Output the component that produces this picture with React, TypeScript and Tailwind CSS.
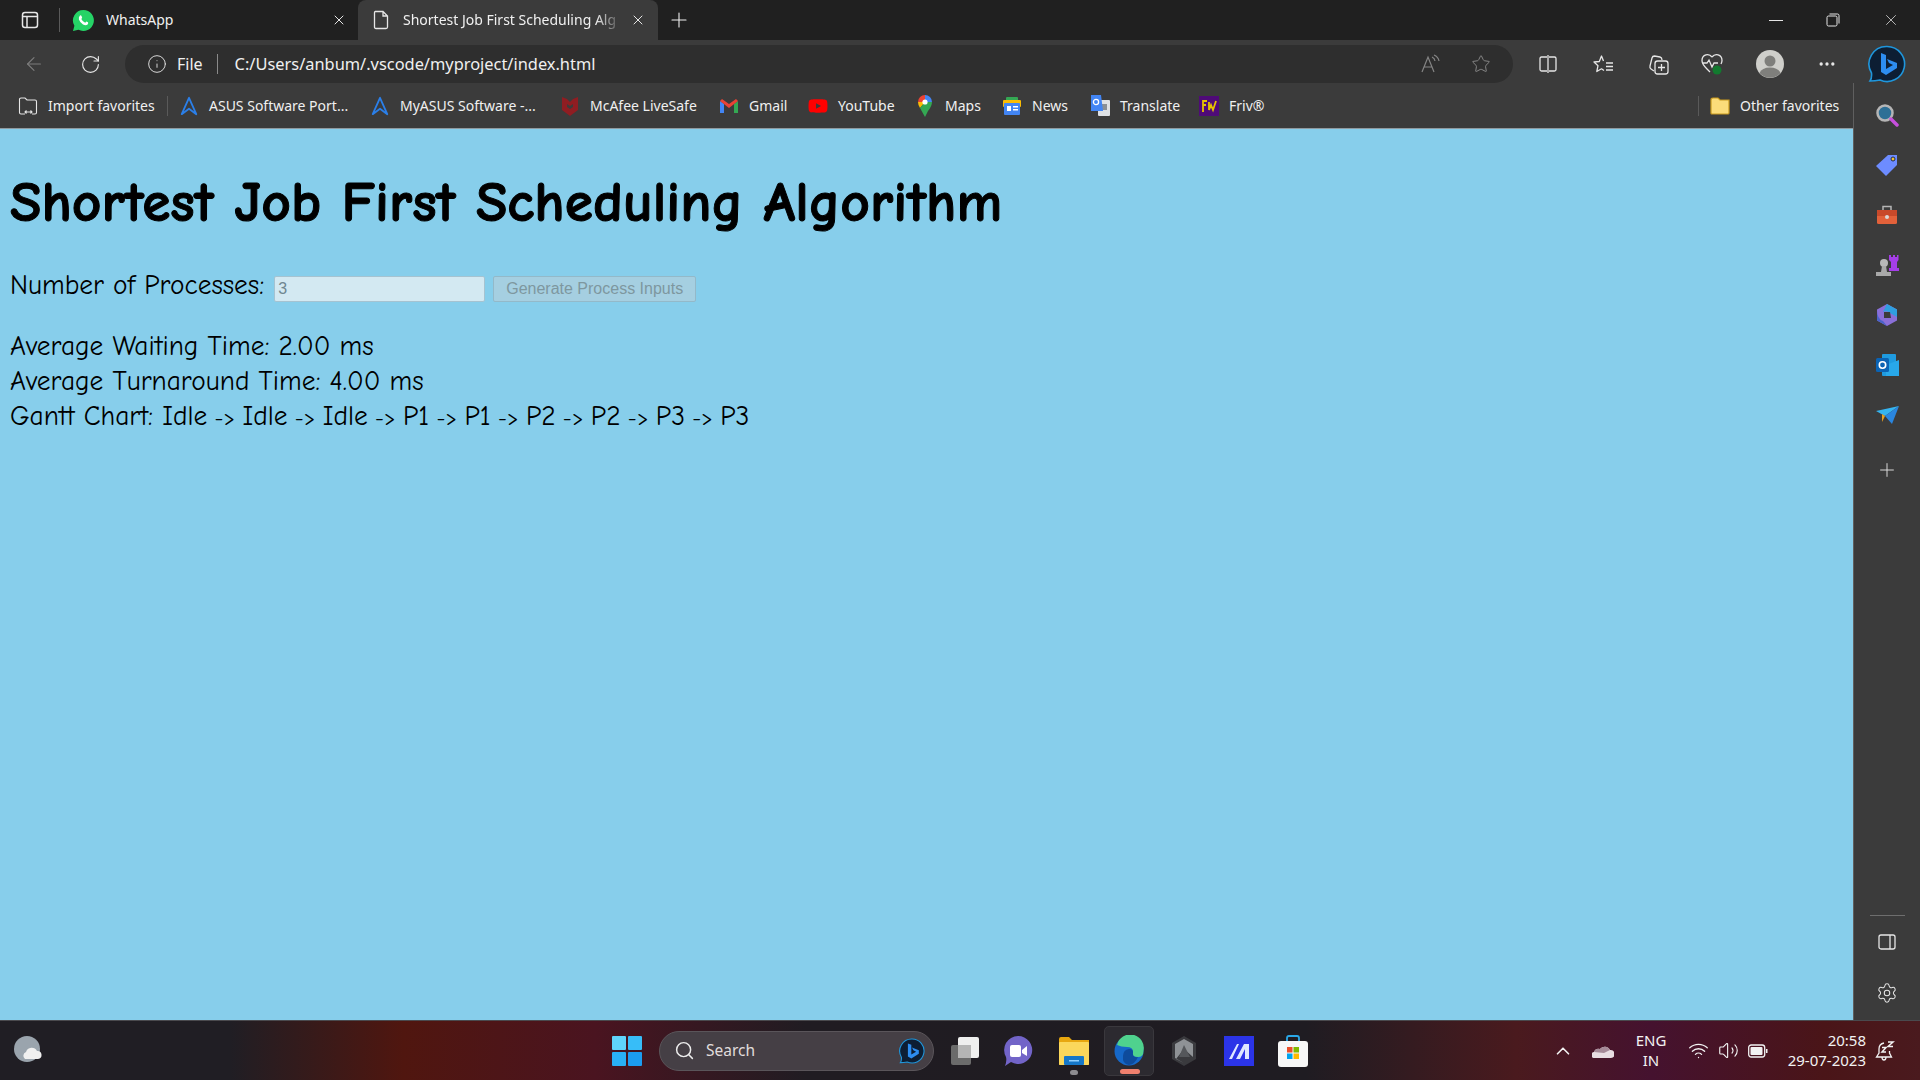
import React from "react";
import {
  ArrowLeft,
  ChevronUp,
  Info,
  MoreHorizontal,
  Plus,
  RotateCw,
  Search,
  Settings,
  Star,
  Volume2,
  Wifi,
  X,
} from "lucide-react";
import { FaYoutube } from "react-icons/fa";

const ui = "font-['Noto_Sans','Open_Sans',sans-serif]";

const Slot: React.FC<{ w: string; children?: React.ReactNode }> = ({ w, children }) => (
  <div className={`${w} h-full flex items-center justify-center shrink-0`}>{children}</div>
);

const WhatsAppIcon = () => (
  <svg width="23" height="23" viewBox="0 0 23 23" className="shrink-0">
    <path d="M11.500 1 A10.500 10.500 0 1 1 6.500 20.800 L1 22 L2.400 16.800 A10.500 10.500 0 0 1 11.500 1 Z" fill="#25d366" />
    <path d="M8 6.500 Q9 6 9.500 7 L10.200 8.700 L9.300 10 Q10.500 12.500 13.200 13.700 L14.400 12.500 L16 13.300 Q16.600 14.300 15.600 15.500 Q13.800 16.800 11 15.400 Q8 13.700 6.900 10.500 Q6.400 8 8 6.500 Z" fill="#fff" />
  </svg>
);

const AsusIcon = () => (
  <svg width="22" height="22" viewBox="0 0 22 22" fill="none" stroke="#2b7fe8" strokeWidth="2" strokeLinejoin="round">
    <path d="M11 2 L3 20 L11 14 L19 20 Z" />
  </svg>
);

const McAfeeIcon = () => (
  <svg width="18" height="22" viewBox="0 0 18 22">
    <path d="M1 2 L6 4 V12 L9 14 L12 12 V4 L17 2 V15 L9 21 L1 15 Z" fill="#8f1d22" />
    <path d="M6 4 L9 7 L12 4 V9 L9 11 L6 9 Z" fill="#8f1d22" />
  </svg>
);

const GmailIcon = () => (
  <svg width="20" height="16" viewBox="0 0 20 16">
    <path d="M1 3 V15 H5 V6 Z" fill="#4285f4" />
    <path d="M15 6 V15 H19 V3 Z" fill="#34a853" />
    <path d="M1 3 L10 10 L19 3 L17 1 L10 6 L3 1 Z" fill="#ea4335" />
  </svg>
);

const MapsIcon = () => (
  <svg width="16" height="24" viewBox="0 0 16 24">
    <path d="M8 1 A7 7 0 0 1 15 8 L8 8 Z" fill="#4285f4" />
    <path d="M1 8 A7 7 0 0 1 8 1 L8 8 Z" fill="#ea4335" />
    <path d="M1 8 H8 L3 14 Q1 11 1 8 Z" fill="#fbbc04" />
    <path d="M15 8 Q15 12 11 17 L8 23 L3 14 L8 8 Z" fill="#34a853" />
    <circle cx="8" cy="8" r="2.600" fill="#fff" />
  </svg>
);

const NewsIcon = () => (
  <svg width="20" height="20" viewBox="0 0 20 20">
    <rect x="4" y="1" width="12" height="8" rx="1" fill="#34a853" />
    <rect x="1" y="4" width="18" height="7" rx="1" fill="#fbbc04" />
    <rect x="2" y="7" width="16" height="12" rx="1" fill="#4285f4" />
    <rect x="5" y="10" width="4" height="5" fill="#fff" />
    <rect x="11" y="10" width="5" height="1.500" fill="#fff" />
    <rect x="11" y="13" width="5" height="1.500" fill="#fff" />
  </svg>
);

const TranslateIcon = () => (
  <svg width="20" height="22" viewBox="0 0 20 22">
    <rect x="8" y="5" width="12" height="16" rx="1" fill="#dfe1e5" />
    <rect x="11" y="9" width="6" height="6" fill="#8a8f96" />
    <path d="M1 0 H11 L13 16 H1 Z" fill="#4285f4" />
    <circle cx="6" cy="7" r="2.600" fill="none" stroke="#fff" strokeWidth="1.300" />
  </svg>
);

const FrivIcon = () => (
  <svg width="20" height="20" viewBox="0 0 20 20">
    <rect width="20" height="20" fill="#4f0a78" />
    <path d="M4 16 V5 H8 M4 9 H7 M10 6 V14 L12 9 L14 14 L17 5" fill="none" stroke="#e6c200" strokeWidth="1.800" />
  </svg>
);

const FolderIcon = () => (
  <svg width="20" height="18" viewBox="0 0 20 18">
    <path d="M1 3 Q1 1 3 1 H8 L10 3 H19 V16 Q19 17 18 17 H2 Q1 17 1 16 Z" fill="#fbdc7a" stroke="#c99a1f" strokeWidth="1.200" />
  </svg>
);

const ImportIcon = () => (
  <svg width="20" height="20" viewBox="0 0 20 20" fill="none" stroke="#e6e6e6" strokeWidth="1.100">
    <path d="M7 18 H3 Q1.500 18 1.500 16.500 V3 Q1.500 2 3 2 H7 L9 4 H17 Q18.500 4 18.500 5.500 V16.500 Q18.500 18 17 18 H14" />
    <path d="M7 16 H14 M8.500 14.500 L7 16 L8.500 17.500 M12.500 14.500 L14 16 L12.500 17.500" />
  </svg>
);

const Bookmark: React.FC<{ w: string; icon: React.ReactNode; label: string }> = ({ w, icon, label }) => (
  <div className={`${w} h-full flex items-center shrink-0`}>
    <div className="w-[20px] flex items-center justify-center shrink-0">{icon}</div>
    <span className="ml-[10px] text-[14px] text-[#f0f0f0] whitespace-nowrap">{label}</span>
  </div>
);

const TabBar = () => (
  <div className="h-10 bg-[#202020] flex items-stretch shrink-0">
    <Slot w="w-[59px]">
      <svg width="20" height="20" viewBox="0 0 20 20" fill="none" stroke="#e6e6e6" strokeWidth="1.500">
        <rect x="2.500" y="2.500" width="15" height="15" rx="2.500" />
        <path d="M2.500 6.500 H17.500 M7 6.500 V17.500" />
      </svg>
    </Slot>
    <div className="w-px h-6 self-center bg-[#5a5a5a]" />
    <div className="w-[298px] flex items-center pl-[12px] pr-[11px] shrink-0">
      <WhatsAppIcon />
      <span className="ml-[11px] mb-[2px] text-[14px] text-[#f0f0f0]">WhatsApp</span>
      <X className="ml-auto text-[#e6e6e6] w-4 h-4" strokeWidth={1.5} />
    </div>
    <div className="w-[300px] bg-[#3b3b3b] rounded-t-lg flex items-center pl-[14px] pr-[12px] shrink-0">
      <svg width="18" height="20" viewBox="0 0 18 20" fill="none" stroke="#e6e6e6" strokeWidth="1.300" className="shrink-0">
        <path d="M3 1.500 H11 L15.500 6 V17 Q15.500 18.500 14 18.500 H4 Q2.500 18.500 2.500 17 V2.500 Q2.500 1.500 3.500 1.500 M11 1.500 V6 H15.500" />
      </svg>
      <span className="ml-[13px] mb-[2px] w-[219px] overflow-hidden whitespace-nowrap text-[14px] text-[#f0f0f0] [mask-image:linear-gradient(90deg,#000_88%,transparent)]">
        Shortest Job First Scheduling Alg
      </span>
      <X className="ml-auto text-[#e6e6e6] w-4 h-4" strokeWidth={1.5} />
    </div>
    <Slot w="w-[42px]">
      <Plus className="text-[#f0f0f0] w-6 h-6" strokeWidth={1.1} />
    </Slot>
    <div className="flex-1" />
    <Slot w="w-[57px]">
      <div className="w-[14px] h-px bg-[#e6e6e6]" />
    </Slot>
    <Slot w="w-[58px]">
      <svg width="14" height="14" viewBox="0 0 14 14" fill="none" stroke="#e6e6e6" strokeWidth="1">
        <rect x="1" y="3" width="10" height="10" rx="1.500" />
        <path d="M3.500 1 H11.500 Q13 1 13 2.500 V10.500" />
      </svg>
    </Slot>
    <Slot w="w-[58px]">
      <X className="text-[#e6e6e6] w-[18px] h-[18px]" strokeWidth={1} />
    </Slot>
  </div>
);

const BingIcon: React.FC<{ size: number }> = ({ size }) => (
  <svg width={size} height={size} viewBox="0 0 38 38">
    <path d="M19 1.500 A17.500 17.500 0 1 1 12 35 Q7 36 2 36 Q4 33 3.500 28 A17.500 17.500 0 0 1 19 1.500 Z" fill="#0d1e33" stroke="#1f96dc" strokeWidth="1.600" />
    <path d="M13 8 L18 10 V24 L25 20 L21 18 L19 14 L29 18 V23 L18 30 L13 27 Z" fill="#2d8df0" />
  </svg>
);

const Toolbar = () => (
  <div className="h-[43px] bg-[#3b3b3b] pt-[5px] flex items-stretch shrink-0">
    <Slot w="w-[62px] pl-[6px]">
      <ArrowLeft className="text-[#7d7d7d] w-[22px] h-[22px]" strokeWidth={1.2} />
    </Slot>
    <Slot w="w-[56px]">
      <RotateCw className="text-[#e6e6e6] w-[21px] h-[21px]" strokeWidth={1.3} />
    </Slot>
    <div className="ml-[7px] w-[1388px] bg-[#2e2e2e] rounded-full flex items-center pl-[22px] pr-[22px] text-[#f0f0f0] shrink-0">
      <Info className="w-[20px] h-[20px] text-[#e6e6e6]" strokeWidth={1.1} />
      <span className="ml-[10px] text-[16px]">File</span>
      <div className="ml-[14px] w-px h-[20px] bg-[#8a8a8a]" />
      <span className="ml-[17px] text-[16.400px]">C:/Users/anbum/.vscode/myproject/index.html</span>
      <div className="ml-auto flex items-center gap-[30px] text-[#858585]">
        <svg width="20" height="20" viewBox="0 0 20 20" fill="none" stroke="currentColor" strokeWidth="1.200">
          <path d="M1 18 L7 3 L13 18 M3 13 H11 M11 3 A5 5 0 0 1 14 7 M13 1 A8 8 0 0 1 18 7" />
        </svg>
        <Star className="w-[20px] h-[20px]" strokeWidth={1.2} />
      </div>
    </div>
    <div className="w-[7px] shrink-0" />
    <Slot w="w-[56px]">
      <svg width="20" height="20" viewBox="0 0 20 20" fill="none" stroke="#e6e6e6" strokeWidth="1.300">
        <path d="M9 3 H3.500 Q2 3 2 4.500 V15.500 Q2 17 3.500 17 H9 M11 3 H16.500 Q18 3 18 4.500 V15.500 Q18 17 16.500 17 H11 M10 1 V19" />
      </svg>
    </Slot>
    <Slot w="w-[55px]">
      <svg width="21" height="21" viewBox="0 0 21 21" fill="none" stroke="#e6e6e6" strokeWidth="1.300" strokeLinejoin="round">
        <path d="M10.500 7 L8.500 2 L6.300 7.500 L1 8 L5 11.700 L3.800 17.500 L8.500 14.800 L11 16.500" />
        <path d="M13 9 H20 M13 12.500 H20 M13 16 H20" />
      </svg>
    </Slot>
    <Slot w="w-[54px]">
      <svg width="21" height="21" viewBox="0 0 21 21" fill="none" stroke="#e6e6e6" strokeWidth="1.300">
        <path d="M6 17 L3 15 Q1.500 14 2 12 L4 4 Q4.500 2 6.500 2 L12 3 Q14 3.500 14 6" />
        <rect x="7" y="7" width="13" height="13" rx="2.500" />
        <path d="M13.500 10 V17 M10 13.500 H17" />
      </svg>
    </Slot>
    <Slot w="w-[54px]">
      <svg width="24" height="24" viewBox="0 0 24 24" fill="none" stroke="#e6e6e6" strokeWidth="1.300">
        <path d="M12 5 C9 1 2 2 2 8.500 C2 12 5 15 7 17 M12 5 C15 1 22 2 22 8.500 Q22 10 21 12 M2 11 H7 L9 8 L12 15 L14 11 H18 M7 17 L10 20" />
        <circle cx="17" cy="18" r="4.500" fill="#127a2f" stroke="none" />
      </svg>
    </Slot>
    <Slot w="w-[62px]">
      <svg width="28" height="28" viewBox="0 0 28 28">
        <circle cx="14" cy="14" r="14" fill="#cfcfcb" />
        <circle cx="14" cy="11" r="5.500" fill="#7f7f7c" />
        <path d="M3.500 23 Q6 17.500 14 17.500 Q22 17.500 24.500 23 A14 14 0 0 1 3.500 23 Z" fill="#7f7f7c" />
      </svg>
    </Slot>
    <Slot w="w-[52px]">
      <MoreHorizontal className="text-[#e6e6e6] w-5 h-5" strokeWidth={2} />
    </Slot>
    <Slot w="w-[67px]">
      <BingIcon size={38} />
    </Slot>
  </div>
);

const BookmarksBar = () => (
  <div className="h-[45px] flex items-center pl-[18px] pr-[12px] shrink-0">
    <Bookmark w="w-[149px]" icon={<ImportIcon />} label="Import favorites" />
    <div className="w-px h-5 bg-[#5a5a5a] shrink-0" />
    <div className="w-[11px] shrink-0" />
    <Bookmark w="w-[191px]" icon={<AsusIcon />} label="ASUS Software Port..." />
    <Bookmark w="w-[190px]" icon={<AsusIcon />} label="MyASUS Software -..." />
    <Bookmark w="w-[159px]" icon={<McAfeeIcon />} label="McAfee LiveSafe" />
    <Bookmark w="w-[89px]" icon={<GmailIcon />} label="Gmail" />
    <Bookmark w="w-[107px]" icon={<FaYoutube className="text-[#ff0000] w-[20px] h-[20px]" />} label="YouTube" />
    <Bookmark w="w-[87px]" icon={<MapsIcon />} label="Maps" />
    <Bookmark w="w-[88px]" icon={<NewsIcon />} label="News" />
    <Bookmark w="w-[109px]" icon={<TranslateIcon />} label="Translate" />
    <Bookmark w="w-[60px]" icon={<FrivIcon />} label="Friv®" />
    <div className="flex-1" />
    <div className="w-px h-5 bg-[#5a5a5a] shrink-0" />
    <div className="w-[11px] shrink-0" />
    <Bookmark w="w-[131px]" icon={<FolderIcon />} label="Other favorites" />
  </div>
);

const Arrow = () => <span className="text-[21.900px]"> -&gt; </span>;

const Page = () => (
  <div className="flex-1 bg-[#87ceeb] border-t border-[#8f9aa0] p-[10px] text-black font-['Comic_Sans_MS','Comic_Neue',cursive]">
    <h1 className="mt-[29px] text-[57.500px] leading-[68px] font-bold whitespace-nowrap [-webkit-text-stroke:1px_black]">
      Shortest Job First Scheduling Algorithm
    </h1>
    <div className="mt-[32px] flex items-center text-[27.400px] leading-[35px]">
      <span>Number of Processes:</span>
      <input
        disabled
        value="3"
        readOnly
        className="ml-[10px] mt-[6px] w-[211px] h-[26px] px-[3px] leading-none bg-[#d3e9f2] border border-[#a5c3d1] rounded-[2px] text-[16px] text-[#6f8791] font-['Liberation_Sans',sans-serif]"
      />
      <button
        disabled
        className="ml-[8px] mt-[6px] w-[203px] h-[26px] leading-none bg-[#a5cfe1] border border-[#93b9c9] rounded-[2px] text-[16px] text-[#7e979f] font-['Liberation_Sans',sans-serif]"
      >
        Generate Process Inputs
      </button>
    </div>
    <div className="mt-[26px] text-[27.400px] leading-[35px]">
      <div>Average Waiting Time: 2.00 ms</div>
      <div>Average Turnaround Time: 4.00 ms</div>
      <div className="whitespace-pre">
        Gantt Chart: Idle<Arrow />Idle<Arrow />Idle<Arrow />P1<Arrow />P1<Arrow />P2<Arrow />P2<Arrow />P3<Arrow />P3
      </div>
    </div>
  </div>
);

const Sidebar = () => (
  <div className="w-[67px] border-l border-[#5f5f5f] flex flex-col items-center pt-[20px] pb-[16px] shrink-0">
    <div className="flex flex-col items-center gap-[26px]">
      <svg width="24" height="24" viewBox="0 0 24 24">
        <circle cx="10" cy="10" r="7.500" fill="#2d6f96" stroke="#b5b5b5" strokeWidth="2.500" />
        <path d="M16 16 L22 22" stroke="#c64fdc" strokeWidth="3.500" strokeLinecap="round" />
      </svg>
      <svg width="24" height="24" viewBox="0 0 24 24">
        <path d="M13 2 H22 V12 L11 23 L1 13 Z" fill="#6d8cff" />
        <circle cx="18" cy="6" r="2" fill="#f4c430" stroke="#1c2a55" />
      </svg>
      <svg width="24" height="24" viewBox="0 0 24 24">
        <path d="M8 7 V3.500 H16 V7" fill="none" stroke="#b5b5b5" strokeWidth="1.500" />
        <rect x="2" y="7" width="20" height="14" rx="1.500" fill="#e2613a" />
        <rect x="2" y="7" width="20" height="6" fill="#c8492a" />
        <circle cx="12" cy="14" r="2" fill="#d9d9d9" />
      </svg>
      <svg width="24" height="24" viewBox="0 0 24 24">
        <circle cx="9" cy="10" r="4" fill="#b8b8b8" />
        <path d="M7 13 H11 L12 19 H16 V23 H1 V19 H6 Z" fill="#a9a9a9" />
        <path d="M14 2 H16 V4 H18 V2 H20 V4 H22 V2 H23.500 V7 L22 9 V15 H24 V18 H14 V15 H16 V9 L14 7 Z" fill="#a53ee8" />
      </svg>
      <svg width="24" height="24" viewBox="0 0 24 24">
        <path d="M12 1 L22 6.500 V17.500 L12 23 L2 17.500 V6.500 Z" fill="#8a6fd8" />
        <path d="M12 1 L22 6.500 V14 L15 10 Q12 7 8 9 Z" fill="#2f9fe0" />
        <path d="M2 7 Q2 16 8 18 L12 23 L2 17.500 Z" fill="#4a62c8" />
        <path d="M9 9 H15 L16 15 H9 Z" fill="#3b3b3b" />
      </svg>
      <svg width="24" height="24" viewBox="0 0 24 24">
        <rect x="7" y="1" width="14" height="22" rx="1" fill="#1f9be0" />
        <path d="M11 12 L24 7 V23 H11 Z" fill="#28a8ea" />
        <rect x="1" y="5" width="13" height="14" rx="1.500" fill="#0a63b4" />
        <circle cx="7.500" cy="12" r="3.200" fill="none" stroke="#fff" strokeWidth="1.600" />
      </svg>
      <svg width="24" height="24" viewBox="0 0 24 22">
        <path d="M1 7 L24 2 L10 12 Z" fill="#35b4f0" />
        <path d="M24 2 L17 20 L10 12 Z" fill="#2a86e0" />
        <path d="M7 10 L10 12 L7 18 Z" fill="#e8a020" />
      </svg>
    </div>
    <Plus className="mt-[32px] text-[#e6e6e6] w-[22px] h-[22px]" strokeWidth={1} />
    <div className="mt-auto w-[35px] h-px bg-[#6e6e6e]" />
    <svg width="20" height="20" viewBox="0 0 20 20" fill="none" stroke="#e6e6e6" strokeWidth="1.300" className="mt-[16px]">
      <rect x="2" y="3" width="16" height="14" rx="2" />
      <path d="M13 3 V17" />
    </svg>
    <Settings className="mt-[30px] text-[#e6e6e6] w-[22px] h-[22px]" strokeWidth={1.1} />
  </div>
);

const Taskbar = () => (
  <div className="h-[60px] border-t border-[#4a4a4e] flex items-center text-white shrink-0 bg-[linear-gradient(90deg,#201e24_0%,#201e24_12%,#50160f_21%,#4a1420_31%,#201c22_42%,#1f1c22_68%,#4a1a1e_79%,#45122f_86%,#4a1518_95%,#4a1a1e_100%)]">
    <svg width="32" height="32" viewBox="0 0 32 32" className="ml-[13px] shrink-0">
      <circle cx="14" cy="14" r="13" fill="#9aa4ad" />
      <path d="M12 24 A4 4 0 0 1 13 17 A6 6 0 0 1 24 16 A4 4 0 0 1 25 24 Z" fill="#f0f0f0" />
    </svg>
    <svg width="30" height="30" viewBox="0 0 30 30" className="ml-[567px] shrink-0">
      <rect x="0" y="0" width="14" height="14" rx="1" fill="#5fd4fb" />
      <rect x="16" y="0" width="14" height="14" rx="1" fill="#37bdf8" />
      <rect x="0" y="16" width="14" height="14" rx="1" fill="#29b0f5" />
      <rect x="16" y="16" width="14" height="14" rx="1" fill="#1b9cf0" />
    </svg>
    <div className="ml-[17px] w-[275px] h-10 rounded-full bg-[#453f45] border border-[#5a555a] flex items-center pl-[14px] pr-[8px] shrink-0">
      <Search className="w-[21px] h-[21px] text-[#ececec]" strokeWidth={1.700} />
      <span className={`ml-[11px] text-[15.500px] text-[#e0dcdc] ${ui}`}>Search</span>
      <div className="ml-auto">
        <BingIcon size={26} />
      </div>
    </div>
    <div className="ml-[15px] w-[32px] flex justify-center shrink-0">
      <svg width="30" height="30" viewBox="0 0 30 30">
        <rect x="1" y="9" width="20" height="20" rx="2" fill="#6b6b6b" />
        <rect x="8" y="1" width="21" height="21" rx="2" fill="#efefef" />
        <rect x="8" y="9" width="13" height="13" fill="#b5b5b5" />
      </svg>
    </div>
    <div className="ml-[21px] w-[32px] flex justify-center shrink-0">
      <svg width="30" height="32" viewBox="0 0 30 32">
        <path d="M15 1 A14 14 0 1 1 8 27 L2 31 Q4 26 3 22 A14 14 0 0 1 15 1 Z" fill="#7264c8" />
        <rect x="7" y="10" width="11" height="12" rx="2" fill="#fff" />
        <path d="M19 15 L24 11 V21 L19 18 Z" fill="#fff" />
      </svg>
    </div>
    <div className="relative ml-[24px] w-[32px] flex justify-center shrink-0">
      <svg width="32" height="30" viewBox="0 0 32 30">
        <path d="M1 3 Q1 1 3 1 H11 L14 4 H31 V28 Q31 29 30 29 H2 Q1 29 1 28 Z" fill="#e8a70f" />
        <rect x="1" y="6" width="30" height="23" rx="1" fill="#fbd75b" />
        <rect x="6" y="20" width="20" height="9" rx="1" fill="#1677c8" />
        <rect x="11" y="24" width="10" height="1.500" fill="#8fd0ff" />
      </svg>
      <div className="absolute -bottom-[9px] left-[12px] w-[8px] h-[5px] rounded-full bg-[#8d8b90]" />
    </div>
    <div className="relative ml-[14px] w-[50px] h-[50px] rounded-[5px] bg-[#2c2a30] border border-[#3a383d] flex items-center justify-center shrink-0">
      <svg width="30" height="32" viewBox="0 0 30 32">
        <circle cx="15" cy="16" r="14.500" fill="#1668c8" />
        <path d="M3 10 A13.500 13.500 0 0 1 29.500 16 Q29.500 22 24 22 Q17 22 19 17 Q19 12 13 12 Q7 12 3 10 Z" fill="#4fd28e" />
        <path d="M19 17 Q18 23 24 22 Q21 29 15 30 Q8 29 9 21 Q9 15 15 14 Q19 14 19 17 Z" fill="#0e4b9c" />
      </svg>
      <div className="absolute bottom-[1px] left-[15px] w-[20px] h-[5px] rounded-full bg-[#f0806e]" />
    </div>
    <div className="ml-[14px] w-[32px] flex justify-center shrink-0">
      <svg width="26" height="32" viewBox="0 0 26 32">
        <path d="M13 1 L25 8 V24 L13 31 L1 24 V8 Z" fill="#3a3a3e" />
        <path d="M13 4 L22 9 V22 L13 14 L5 24 L13 28 L4 23 V9 Z" fill="#8f9296" />
        <path d="M13 10 L19 22 H8 Z" fill="#55575b" />
      </svg>
    </div>
    <div className="ml-[24px] w-[30px] h-[30px] shrink-0">
      <svg width="30" height="30" viewBox="0 0 30 30">
        <rect width="30" height="30" fill="#2b34e8" />
        <path d="M5 23 L13 8 H15 L8 23 Z M12 23 L20 8 H25 V23 H21 V13 L16 23 Z" fill="#dfe8ff" />
      </svg>
    </div>
    <div className="ml-[24px] w-[30px] shrink-0">
      <svg width="30" height="32" viewBox="0 0 30 32">
        <path d="M9 7 V3 Q9 1 11 1 H19 Q21 1 21 3 V7" fill="none" stroke="#2aa8e8" strokeWidth="1.800" />
        <rect y="6" width="30" height="26" rx="3" fill="#f7f7f7" />
        <rect x="9" y="12" width="5.500" height="5.500" fill="#ea4f2a" />
        <rect x="15.500" y="12" width="5.500" height="5.500" fill="#7fba00" />
        <rect x="9" y="18.500" width="5.500" height="5.500" fill="#00a4ef" />
        <rect x="15.500" y="18.500" width="5.500" height="5.500" fill="#ffb900" />
      </svg>
    </div>
    <div className="flex-1" />
    <ChevronUp className="w-[22px] h-[22px] text-[#f2f2f2]" strokeWidth={1.800} />
    <svg width="22" height="14" viewBox="0 0 22 14" className="ml-[18px] shrink-0">
      <path d="M3 14 A3 3 0 0 1 2 8 A5 5 0 0 1 8 5 A6 6 0 0 1 18 6 A4 4 0 0 1 19 14 Z" fill="#e8dde2" />
      <path d="M2 8 A5 5 0 0 1 8 5 A6 6 0 0 1 18 6 L12 9 Z" fill="#a58a98" />
    </svg>
    <div className={`ml-[21px] mb-[2px] w-[32px] text-center text-[15px] leading-[20px] text-[#f2f2f2] ${ui}`}>
      <div>ENG</div>
      <div>IN</div>
    </div>
    <Wifi className="ml-[21px] w-[21px] h-[21px] text-[#f2f2f2]" strokeWidth={1.500} />
    <Volume2 className="ml-[9px] w-[21px] h-[21px] text-[#f2f2f2]" strokeWidth={1.300} />
    <svg width="20" height="14" viewBox="0 0 20 14" fill="none" className="ml-[9px] shrink-0">
      <rect x="0.700" y="1" width="16" height="12" rx="2.500" stroke="#f2f2f2" strokeWidth="1.300" />
      <rect x="2.500" y="3" width="12" height="8" rx="1" fill="#f2f2f2" />
      <rect x="18" y="5" width="1.500" height="4" fill="#f2f2f2" />
    </svg>
    <div className={`ml-[10px] mb-[2px] w-[88px] text-right text-[15px] leading-[20px] text-[#f2f2f2] ${ui}`}>
      <div>20:58</div>
      <div>29-07-2023</div>
    </div>
    <svg width="20" height="22" viewBox="0 0 20 22" fill="none" stroke="#f2f2f2" strokeWidth="1.300" className="ml-[9px] mr-[25px] shrink-0">
      <path d="M9 3 Q4 4 4 9 V13 L1.500 17 H16.500 L14.500 13 V11 M7 17 Q7 20 9 20 Q11 20 11 17" />
      <path d="M7 7.500 H11 L7 12 H11 M13 2 H18 L13 6.500 H18" strokeWidth="1.500" />
    </svg>
  </div>
);

export default function App() {
  return (
    <div className={`w-[1920px] h-[1080px] overflow-hidden flex flex-col bg-[#3b3b3b] ${ui}`}>
      <TabBar />
      <Toolbar />
      <div className="flex-1 flex min-h-0">
        <div className="flex-1 flex flex-col min-w-0">
          <BookmarksBar />
          <Page />
        </div>
        <Sidebar />
      </div>
      <Taskbar />
    </div>
  );
}
